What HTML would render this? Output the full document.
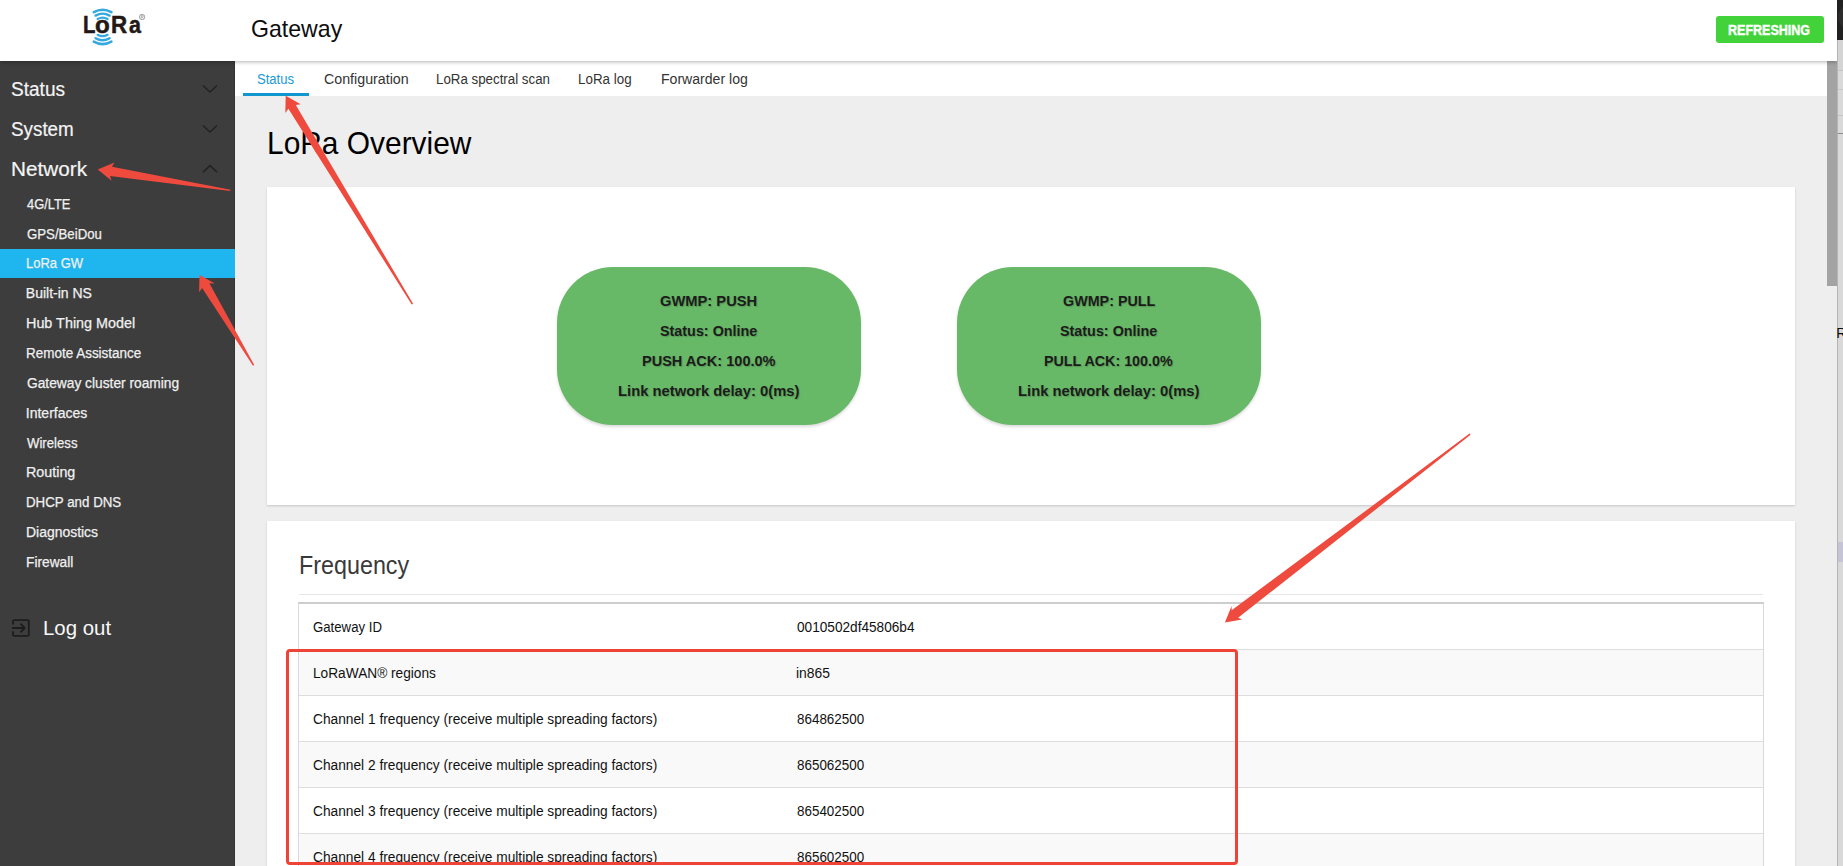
<!DOCTYPE html>
<html><head><meta charset="utf-8">
<style>
html,body{margin:0;padding:0;width:1843px;height:866px;overflow:hidden;background:#eeeeee;font-family:"Liberation Sans",sans-serif;position:relative;}
.a{position:absolute;}
.t{position:absolute;line-height:1;white-space:nowrap;}
.card{background:#fff;box-shadow:0 1px 2px rgba(0,0,0,.16);}
.pill{background:#67b867;border-radius:56px;box-shadow:0 2px 3px rgba(0,0,0,.14);width:304px;height:158px;}
</style></head><body>
<div class="a" style="left:0;top:0;width:1837px;height:61px;background:#fff;z-index:6;box-shadow:0 1px 4px rgba(0,0,0,.30);"></div>
<div class="a" style="left:0;top:0;width:1837px;height:61px;z-index:7;">
<div class="t" style="left:250.74px;top:17.00px;font-size:24px;color:#0d0d0d;transform:scaleX(0.9628);transform-origin:0 0;">Gateway</div>
<div class="a" style="left:1716px;top:16px;width:108px;height:27px;background:#42d23a;border-radius:3px;"></div>
<div class="t" style="left:1728.31px;top:23.00px;font-size:14px;font-weight:bold;color:#fff;transform:scaleX(0.8945);transform-origin:0 0;-webkit-text-stroke:0.4px #fff;">REFRESHING</div>
</div>
<svg class="a" style="left:0;top:0;z-index:8" width="200" height="61" viewBox="0 0 200 61">
<g fill="none" stroke="#35a8e0" stroke-linecap="round">
<path d="M93.8 12.2 Q102.6 7.2 111.4 12.2" stroke-width="2.6"/>
<path d="M95.6 15.6 Q102.6 11.6 109.6 15.6" stroke-width="2.4"/>
<path d="M97.6 19.0 Q102.6 16.2 107.6 19.0" stroke-width="2.2"/>
<path d="M97.6 34.8 Q102.6 37.6 107.6 34.8" stroke-width="2.2"/>
<path d="M95.6 38.2 Q102.6 42.2 109.6 38.2" stroke-width="2.4"/>
<path d="M93.8 41.6 Q102.6 46.6 111.4 41.6" stroke-width="2.6"/>
</g>
<circle cx="142.1" cy="17" r="2.7" fill="none" stroke="#8a8a8a" stroke-width="0.75"/><path d="M141.2 18.6 V15.4 H142.4 Q143.4 15.4 143.4 16.2 Q143.4 17 142.4 17 H141.2 M142.3 17 L143.3 18.6" fill="none" stroke="#8a8a8a" stroke-width="0.6"/>
</svg>
<div class="a" style="left:0;top:0;z-index:8"><div class="t" style="left:82.75px;top:13.00px;font-size:24px;font-weight:bold;color:#231815;transform:scaleX(0.8462);transform-origin:0 0;-webkit-text-stroke:0.5px #231815;">L</div><div class="t" style="left:95.39px;top:13.00px;font-size:24px;font-weight:bold;color:#231815;transform:scaleX(1.0077);transform-origin:0 0;-webkit-text-stroke:0.5px #231815;">o</div><div class="t" style="left:111.07px;top:13.00px;font-size:24px;font-weight:bold;color:#231815;transform:scaleX(0.9313);transform-origin:0 0;-webkit-text-stroke:0.5px #231815;">R</div><div class="t" style="left:128.60px;top:13.00px;font-size:24px;font-weight:bold;color:#231815;transform:scaleX(0.8929);transform-origin:0 0;-webkit-text-stroke:0.5px #231815;">a</div></div>
<div class="a" style="left:0;top:61px;width:235px;height:805px;background:#3d3d3d;z-index:4;box-shadow:inset -1px 0 0 #333;"></div>
<div class="a" style="left:0;top:249px;width:235px;height:29px;background:#1fb5ee;z-index:4;"></div>
<div class="a" style="left:0;top:0;z-index:5">
<div class="t" style="left:11.05px;top:79.00px;font-size:20px;color:#f4f4f4;transform:scaleX(0.9527);transform-origin:0 0;-webkit-text-stroke:0.2px #f4f4f4;">Status</div>
<div class="t" style="left:11.06px;top:119.00px;font-size:20px;color:#f4f4f4;transform:scaleX(0.9415);transform-origin:0 0;-webkit-text-stroke:0.2px #f4f4f4;">System</div>
<div class="t" style="left:10.96px;top:159.00px;font-size:20px;color:#f4f4f4;transform:scaleX(1.0361);transform-origin:0 0;-webkit-text-stroke:0.2px #f4f4f4;">Network</div>
<div class="t" style="left:26.80px;top:197.00px;font-size:14px;color:#f0f0f0;transform:scaleX(0.9170);transform-origin:0 0;-webkit-text-stroke:0.25px #f0f0f0;">4G/LTE</div>
<div class="t" style="left:26.80px;top:227.00px;font-size:14px;color:#f0f0f0;transform:scaleX(0.9430);transform-origin:0 0;-webkit-text-stroke:0.25px #f0f0f0;">GPS/BeiDou</div>
<div class="t" style="left:25.87px;top:256.00px;font-size:14px;color:#f0f0f0;transform:scaleX(0.9295);transform-origin:0 0;-webkit-text-stroke:0.25px #f0f0f0;">LoRa GW</div>
<div class="t" style="left:25.80px;top:286.00px;font-size:14px;color:#f0f0f0;-webkit-text-stroke:0.25px #f0f0f0;">Built-in NS</div>
<div class="t" style="left:25.77px;top:316.00px;font-size:14px;color:#f0f0f0;transform:scaleX(1.0267);transform-origin:0 0;-webkit-text-stroke:0.25px #f0f0f0;">Hub Thing Model</div>
<div class="t" style="left:25.84px;top:346.00px;font-size:14px;color:#f0f0f0;transform:scaleX(0.9622);transform-origin:0 0;-webkit-text-stroke:0.25px #f0f0f0;">Remote Assistance</div>
<div class="t" style="left:26.80px;top:376.00px;font-size:14px;color:#f0f0f0;transform:scaleX(0.9825);transform-origin:0 0;-webkit-text-stroke:0.25px #f0f0f0;">Gateway cluster roaming</div>
<div class="t" style="left:25.80px;top:406.00px;font-size:14px;color:#f0f0f0;-webkit-text-stroke:0.25px #f0f0f0;">Interfaces</div>
<div class="t" style="left:26.80px;top:436.00px;font-size:14px;color:#f0f0f0;transform:scaleX(0.9407);transform-origin:0 0;-webkit-text-stroke:0.25px #f0f0f0;">Wireless</div>
<div class="t" style="left:25.78px;top:465.00px;font-size:14px;color:#f0f0f0;transform:scaleX(1.0213);transform-origin:0 0;-webkit-text-stroke:0.25px #f0f0f0;">Routing</div>
<div class="t" style="left:25.85px;top:495.00px;font-size:14px;color:#f0f0f0;transform:scaleX(0.9515);transform-origin:0 0;-webkit-text-stroke:0.25px #f0f0f0;">DHCP and DNS</div>
<div class="t" style="left:25.80px;top:525.00px;font-size:14px;color:#f0f0f0;transform:scaleX(0.9958);transform-origin:0 0;-webkit-text-stroke:0.25px #f0f0f0;">Diagnostics</div>
<div class="t" style="left:25.82px;top:555.00px;font-size:14px;color:#f0f0f0;transform:scaleX(0.9809);transform-origin:0 0;-webkit-text-stroke:0.25px #f0f0f0;">Firewall</div>
<div class="t" style="left:42.68px;top:618.00px;font-size:20px;color:#f8f8f8;transform:scaleX(1.0197);transform-origin:0 0;">Log out</div>
</div>
<svg class="a" style="left:0;top:0;z-index:5" width="235" height="700">
<g fill="none" stroke="#232323" stroke-width="1.6">
<path d="M203 85.5 L210 92 L217 85.5"/>
<path d="M203 125.5 L210 132 L217 125.5"/>
<path d="M203 172.2 L210 165.7 L217 172.2"/>
</g>
<g fill="none" stroke="#1d1d1d" stroke-width="1.8" stroke-linejoin="round">
<path d="M13 624.6 V621.2 Q13 620.1 14.1 620.1 H27.7 Q28.8 620.1 28.8 621.2 V634.8 Q28.8 635.9 27.7 635.9 H14.1 Q13 635.9 13 634.8 V631.3"/>
<path d="M12 628 H24.2 M20.5 623.7 L24.7 628 L20.5 632.3"/>
</g>
</svg>
<div class="a" style="left:235px;top:61px;width:1592px;height:35px;background:#fff;z-index:2;"></div>
<div class="a" style="left:243px;top:93px;width:66px;height:3px;background:#1296d0;z-index:3;"></div>
<div class="a" style="left:0;top:0;z-index:3">
<div class="t" style="left:257.27px;top:72.00px;font-size:14px;color:#1a9ad6;transform:scaleX(0.9333);transform-origin:0 0;">Status</div>
<div class="t" style="left:323.50px;top:72.00px;font-size:14px;color:#333;transform:scaleX(1.0169);transform-origin:0 0;">Configuration</div>
<div class="t" style="left:436.25px;top:72.00px;font-size:14px;color:#333;transform:scaleX(0.9508);transform-origin:0 0;">LoRa spectral scan</div>
<div class="t" style="left:578.34px;top:72.00px;font-size:14px;color:#333;transform:scaleX(0.9564);transform-origin:0 0;">LoRa log</div>
<div class="t" style="left:660.50px;top:72.00px;font-size:14px;color:#333;transform:scaleX(1.0047);transform-origin:0 0;">Forwarder log</div>
</div>
<div class="a" style="left:1827px;top:61px;width:10px;height:225px;background:#a3a3a3;z-index:3;"></div>
<div class="a" style="left:1837px;top:0;width:6px;height:866px;background:#d9d9d9;z-index:9;box-shadow:inset 1px 0 0 #b5b5b5;"></div>
<div class="a" style="left:1837px;top:0;width:6px;height:40px;background:#212121;z-index:9;overflow:hidden;"><div class="a" style="left:1px;top:5px;width:24px;height:24px;border-radius:50%;background:#2c2c2c;"></div></div>
<div class="a" style="left:1838px;top:542px;width:5px;height:20px;background:#c4c4d6;z-index:9;"></div>
<div class="a" style="left:1838px;top:70px;width:5px;height:1px;background:#c4c4c4;z-index:9;"></div>
<div class="a" style="left:1838px;top:89px;width:5px;height:1px;background:#c8c8c8;z-index:9;"></div>
<div class="a" style="left:1838px;top:115px;width:5px;height:1px;background:#c4c4c4;z-index:9;"></div>
<div class="a" style="left:1838px;top:133px;width:5px;height:1px;background:#8c8c8c;z-index:9;"></div>
<div class="a" style="left:1838px;top:40px;width:5px;height:30px;background:#d4d4d4;z-index:9;"></div>
<div class="a" style="left:0;top:0;z-index:10;"><div class="t" style="left:1836.30px;top:326.00px;font-size:14px;color:#111;">R</div></div>
<div class="t" style="left:267.13px;top:127.00px;font-size:32px;color:#000;transform:scaleX(0.9346);transform-origin:0 0;">LoRa Overview</div>
<div class="a card" style="left:267px;top:187px;width:1528px;height:318px;"></div>
<div class="a card" style="left:267px;top:521px;width:1528px;height:400px;"></div>
<div class="a pill" style="left:557px;top:267px;"></div>
<div class="t" style="left:660.20px;top:293.00px;font-size:15px;font-weight:bold;color:#1c1c1c;transform:scaleX(0.9798);transform-origin:0 0;text-shadow:1px 1px 1px rgba(0,0,0,.18);">GWMP: PUSH</div>
<div class="t" style="left:660.20px;top:323.00px;font-size:15px;font-weight:bold;color:#1c1c1c;transform:scaleX(0.9569);transform-origin:0 0;text-shadow:1px 1px 1px rgba(0,0,0,.18);">Status: Online</div>
<div class="t" style="left:641.73px;top:353.00px;font-size:15px;font-weight:bold;color:#1c1c1c;transform:scaleX(0.9686);transform-origin:0 0;text-shadow:1px 1px 1px rgba(0,0,0,.18);">PUSH ACK: 100.0%</div>
<div class="t" style="left:617.51px;top:383.00px;font-size:15px;font-weight:bold;color:#1c1c1c;transform:scaleX(0.9852);transform-origin:0 0;text-shadow:1px 1px 1px rgba(0,0,0,.18);">Link network delay: 0(ms)</div>
<div class="a pill" style="left:957px;top:267px;"></div>
<div class="t" style="left:1062.80px;top:293.00px;font-size:15px;font-weight:bold;color:#1c1c1c;transform:scaleX(0.9546);transform-origin:0 0;text-shadow:1px 1px 1px rgba(0,0,0,.18);">GWMP: PULL</div>
<div class="t" style="left:1060.20px;top:323.00px;font-size:15px;font-weight:bold;color:#1c1c1c;transform:scaleX(0.9569);transform-origin:0 0;text-shadow:1px 1px 1px rgba(0,0,0,.18);">Status: Online</div>
<div class="t" style="left:1044.35px;top:353.00px;font-size:15px;font-weight:bold;color:#1c1c1c;transform:scaleX(0.9522);transform-origin:0 0;text-shadow:1px 1px 1px rgba(0,0,0,.18);">PULL ACK: 100.0%</div>
<div class="t" style="left:1017.51px;top:383.00px;font-size:15px;font-weight:bold;color:#1c1c1c;transform:scaleX(0.9852);transform-origin:0 0;text-shadow:1px 1px 1px rgba(0,0,0,.18);">Link network delay: 0(ms)</div>
<div class="t" style="left:299.33px;top:553.00px;font-size:25px;color:#3a3a3a;transform:scaleX(0.9328);transform-origin:0 0;">Frequency</div>
<div class="a" style="left:299px;top:594px;width:1464px;height:1px;background:#e6e6e6;"></div>
<div class="a" style="left:298px;top:602px;width:1466px;height:300px;z-index:1;border:1px solid #d9d9d9;border-right:1.5px solid #d9d9d9;border-top:2px solid #cdcdcd;box-sizing:border-box;"></div>
<div class="a" style="left:299px;top:603px;width:1464px;height:46px;background:#fff;box-sizing:border-box;"></div>
<div class="t" style="left:313.40px;top:620.00px;font-size:14px;color:#111;transform:scaleX(0.9425);transform-origin:0 0;">Gateway ID</div>
<div class="t" style="left:796.70px;top:620.00px;font-size:14px;color:#111;transform:scaleX(0.9736);transform-origin:0 0;">0010502df45806b4</div>
<div class="a" style="left:299px;top:649px;width:1464px;height:46px;background:#f9f9f9;border-top:1px solid #dedede;box-sizing:border-box;"></div>
<div class="t" style="left:313.02px;top:666.00px;font-size:14px;color:#111;transform:scaleX(0.9776);transform-origin:0 0;">LoRaWAN® regions</div>
<div class="t" style="left:795.71px;top:666.00px;font-size:14px;color:#111;transform:scaleX(0.9909);transform-origin:0 0;">in865</div>
<div class="a" style="left:299px;top:695px;width:1464px;height:46px;background:#fff;border-top:1px solid #dedede;box-sizing:border-box;"></div>
<div class="t" style="left:313.40px;top:712.00px;font-size:14px;color:#111;transform:scaleX(0.9809);transform-origin:0 0;">Channel 1 frequency (receive multiple spreading factors)</div>
<div class="t" style="left:796.70px;top:712.00px;font-size:14px;color:#111;transform:scaleX(0.9586);transform-origin:0 0;">864862500</div>
<div class="a" style="left:299px;top:741px;width:1464px;height:46px;background:#f9f9f9;border-top:1px solid #dedede;box-sizing:border-box;"></div>
<div class="t" style="left:313.40px;top:758.00px;font-size:14px;color:#111;transform:scaleX(0.9809);transform-origin:0 0;">Channel 2 frequency (receive multiple spreading factors)</div>
<div class="t" style="left:796.70px;top:758.00px;font-size:14px;color:#111;transform:scaleX(0.9586);transform-origin:0 0;">865062500</div>
<div class="a" style="left:299px;top:787px;width:1464px;height:46px;background:#fff;border-top:1px solid #dedede;box-sizing:border-box;"></div>
<div class="t" style="left:313.40px;top:804.00px;font-size:14px;color:#111;transform:scaleX(0.9809);transform-origin:0 0;">Channel 3 frequency (receive multiple spreading factors)</div>
<div class="t" style="left:796.70px;top:804.00px;font-size:14px;color:#111;transform:scaleX(0.9586);transform-origin:0 0;">865402500</div>
<div class="a" style="left:299px;top:833px;width:1464px;height:46px;background:#f9f9f9;border-top:1px solid #dedede;box-sizing:border-box;"></div>
<div class="t" style="left:313.40px;top:850.00px;font-size:14px;color:#111;transform:scaleX(0.9809);transform-origin:0 0;">Channel 4 frequency (receive multiple spreading factors)</div>
<div class="t" style="left:796.70px;top:850.00px;font-size:14px;color:#111;transform:scaleX(0.9586);transform-origin:0 0;">865602500</div>
<div class="a" style="left:286px;top:649px;width:952px;height:216px;border:3px solid #ee4337;border-radius:4px;box-sizing:border-box;z-index:20;"></div>
<svg class="a" style="left:0;top:0;z-index:21" width="1843" height="866"><g fill="#ef4a3e"><path d="M97.70 169.40 L114.40 162.60 L112.00 166.70 L230.41 189.71 L230.19 191.09 L110.00 175.90 L111.60 180.80 Z"/><path d="M285.70 95.80 L300.70 104.30 L295.80 105.10 L413.08 303.78 L411.72 304.62 L288.40 108.80 L285.30 113.10 Z"/><path d="M199.50 275.00 L214.90 283.40 L209.40 283.20 L254.20 365.04 L253.00 365.76 L202.10 288.00 L199.10 292.30 Z"/><path d="M1224.90 622.40 L1231.60 606.00 L1231.70 610.30 L1469.64 433.61 L1470.56 434.79 L1238.10 617.80 L1242.10 619.50 Z"/></g></svg>
</body></html>
